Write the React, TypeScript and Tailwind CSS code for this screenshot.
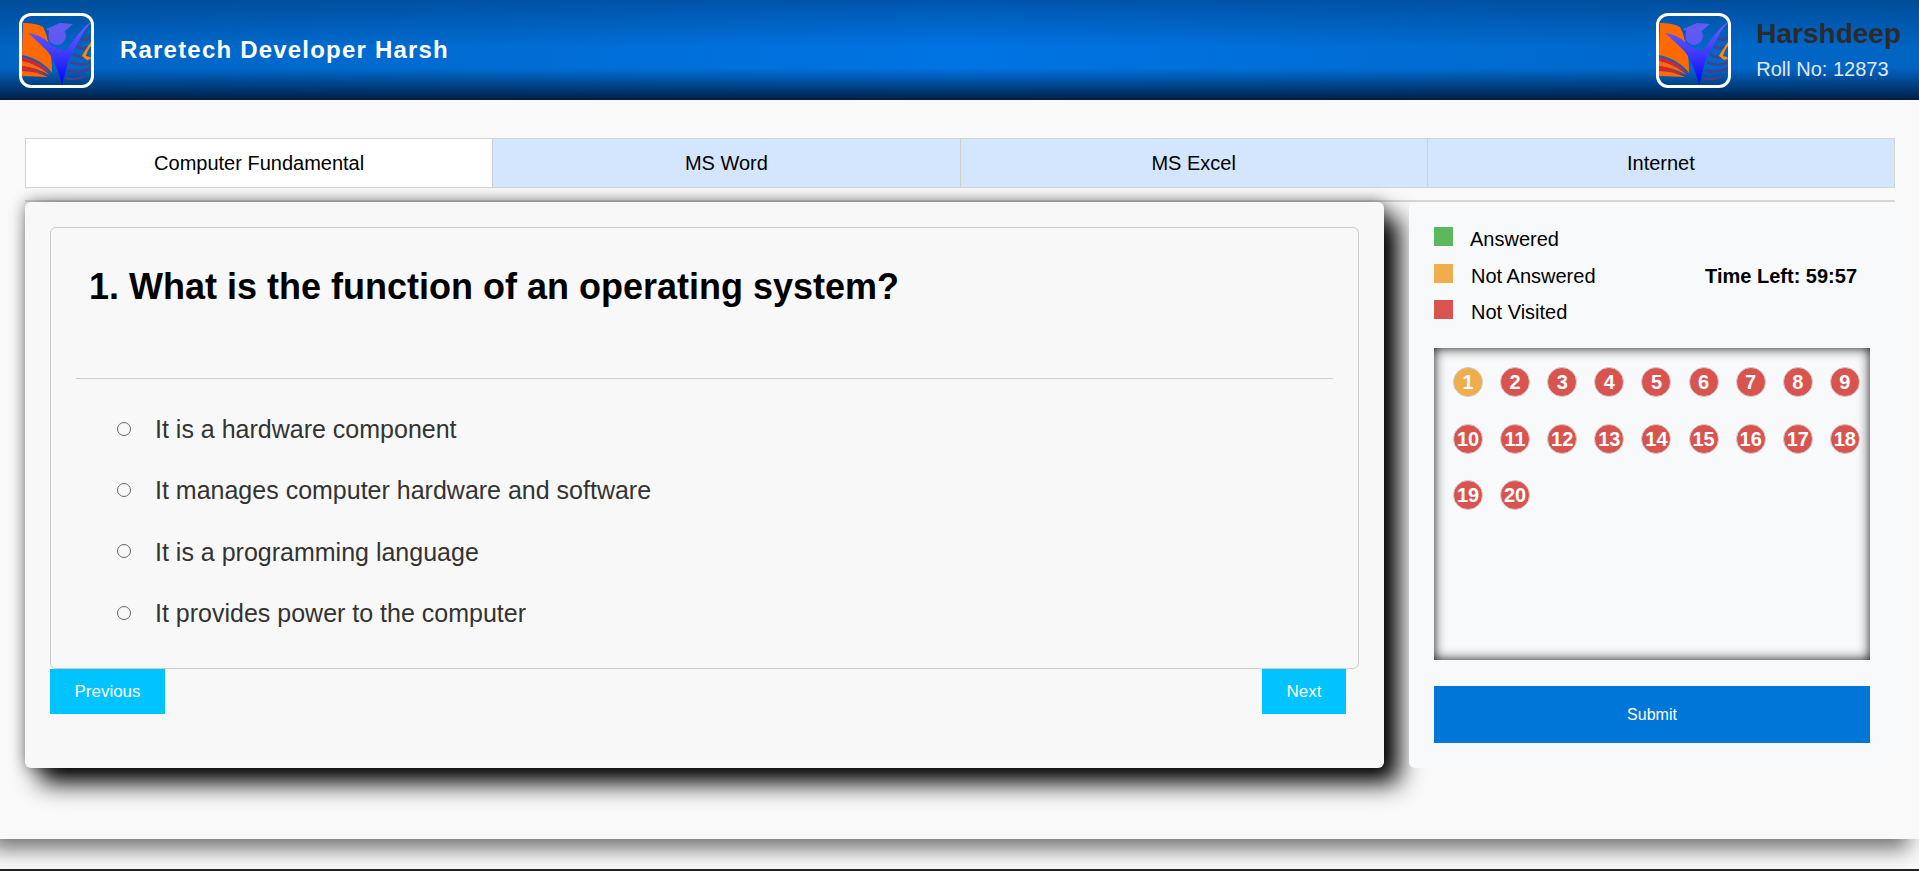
const font = "font-['Liberation_Sans',Arial,sans-serif]";

function Logo({ id }: { id: string }) {
  return (
    <div className="w-[75px] h-[75px] shrink-0 rounded-[12px] border-[3px] border-white overflow-hidden">
      <svg viewBox="0 0 69 69" className="w-full h-full block">
        <defs>
          <linearGradient id={id} x1="0" y1="0" x2="0" y2="1">
            <stop offset="0" stopColor="#6f62ff" />
            <stop offset="0.55" stopColor="#3a36ff" />
            <stop offset="1" stopColor="#0000ff" />
          </linearGradient>
        </defs>
        <path d="M1 7 C9 7 16 8 21 11 C27 22 30 40 30 57 C24 48 12 41 0 39 Z" fill="#ff6a00" />
        <path d="M0 41 C12 43 23 50 29 58 C20 52 10 47 0 45 Z" fill="#d8232a" />
        <path d="M0 45 C10 47 20 52 28 59 C19 54 9 51 0 50 Z" fill="#ff6a00" />
        <path d="M0 50 C9 51 19 55 27 60 C18 57 9 55 0 55 Z" fill="#d8232a" />
        <path d="M0 55 C9 55 18 57 26 61 L0 60 Z" fill="#ff6a00" />
        <g fill="none" stroke="#45408f" strokeWidth="2.6">
          <path d="M58 22 C62 24 65 24 69 22" />
          <path d="M54 30 C60 33 62 33 66 31" />
          <path d="M51 38 C57 42 62 42 66 40" />
          <path d="M48 46 C56 50 64 49 69 46" />
          <path d="M46 54 C54 57 62 56 69 52" />
          <path d="M44 62 C50 64 58 63 63 60" />
        </g>
        <path d="M69 26 C66 30 62 36 60 40 L65 44 L69 43 L68 41 L64 40 C65 36 67 32 69 30 Z" fill="#ff8a00" />
        <path d="M6 17 C14 18 20 21 25 25 C30 30 37 35 45 34 C51 24 60 12 70 5 C66 10 62 15 60 19 C54 30 49 38 46 46 C44 54 42 62 40 69 C38 60 35 52 31 44 C28 38 25 34 21 31 C16 26 11 21 6 17 Z" fill={`url(#${id})`} />
        <circle cx="35" cy="20" r="9" fill="#5f58f2" />
        <path d="M24 13 L38 7 L51 8 L43 15 L30 18 Z" fill="#615cee" />
        <path d="M26 14 L26 24" stroke="#3a38c0" strokeWidth="1" />
      </svg>
    </div>
  );
}

const legend = [
  ["Answered", "bg-[#5cb85c]", "ml-[17px]"],
  ["Not Answered", "bg-[#f0ad4e]", "ml-[18px]"],
  ["Not Visited", "bg-[#d9534f]", "ml-[18px]"],
];

const options = [
  "It is a hardware component",
  "It manages computer hardware and software",
  "It is a programming language",
  "It provides power to the computer",
];

export default function App() {
  return (
    <div className={`${font} w-[1919px] h-[871px] overflow-hidden bg-[#fafafa] flex flex-col`}>
      <header className="h-[100px] shrink-0 flex items-center justify-between pl-[19px] pr-[18px] bg-[linear-gradient(180deg,rgba(0,40,90,0.4)_0%,rgba(0,40,90,0)_47%,rgba(0,30,70,0)_68%,rgba(0,20,50,0.85)_100%),linear-gradient(90deg,#0064c2_0%,#0074e4_50%,#0064c2_100%)]">
        <div className="flex items-center gap-[26px]">
          <Logo id="logo-a" />
          <div className="text-white font-bold text-[24px] tracking-[1.2px]">Raretech Developer Harsh</div>
        </div>
        <div className="flex items-center gap-[25px]">
          <Logo id="logo-b" />
          <div>
            <div className="text-[28px] leading-[34px] font-bold text-[#2b2b2b]">Harshdeep</div>
            <div className="text-[20px] leading-[28px] mt-[4px] text-[#e3e8f0]">Roll No: 12873</div>
          </div>
        </div>
      </header>

      <main className="h-[739px] shrink-0 bg-[#f9f9f9] shadow-[-10px_10px_20px_rgba(0,0,0,0.55)] pl-[25px] pt-[38px] pr-[24px]">
        <div className="flex h-[50px] border border-[#d4d4d4]">
          {["Computer Fundamental", "MS Word", "MS Excel", "Internet"].map((t, i) => (
            <div
              key={t}
              className={`flex-1 flex items-center justify-center text-[20px] text-black ${i === 0 ? "bg-white" : "bg-[#d4e6fd]"} ${i > 0 ? "border-l border-[#cfcfcf]" : ""}`}
            >
              {t}
            </div>
          ))}
        </div>
        <div className="h-[2px] mt-[12px] bg-[#d6d6d6]" />

        <div className="flex gap-[25px] items-stretch h-[566px]">
          <section className="w-[1359px] shrink-0 h-full bg-[#f8f8f8] rounded-[6px] shadow-[15px_15px_25px_#000000,0_0_15px_rgba(0,0,0,0.45)] px-[25px] pt-[25px]">
            <div className="h-[442px] border border-[#cccccc] rounded-[6px] px-[25px]">
              <h1 className="text-[36px] leading-[42px] font-bold text-black pl-[13px] pt-[38px] h-[150px]">
                1. What is the function of an operating system?
              </h1>
              <div className="h-px bg-[#d0d0d0]" />
              <div className="pt-[20px] flex flex-col">
                {options.map((o) => (
                  <div key={o} className="h-[61.4px] flex items-center pl-[41px] text-[25px] text-[#333333]">
                    <span className="w-[14px] h-[14px] -translate-y-px rounded-full border border-[#666666] bg-[#f8f8f8] shrink-0" />
                    <span className="ml-[24px]">{o}</span>
                  </div>
                ))}
              </div>
            </div>
            <div className="flex justify-between pr-[13px]">
              <button className="w-[115px] h-[45px] bg-[#00c3ff] text-white text-[17px]">Previous</button>
              <button className="w-[84px] h-[45px] bg-[#00c3ff] text-white text-[17px]">Next</button>
            </div>
          </section>

          <aside className="flex-1 h-full bg-[#f8f9fb] rounded-[6px] px-[25px] pt-[25px]">
            <div className="flex justify-between items-start h-[121px]">
              <div className="flex flex-col">
                {legend.map(([label, color, ml]) => (
                  <div key={label} className="flex items-start h-[36.5px] text-[20px] leading-[24px] text-black">
                    <span className={`w-[19px] h-[19px] ${color}`} />
                    <span className={ml}>{label}</span>
                  </div>
                ))}
              </div>
              <div className="text-[20px] leading-[24px] mt-[37px] font-bold text-black pr-[13px]">Time Left: 59:57</div>
            </div>
            <div className="h-[312px] shadow-[inset_0_0_12px_rgba(0,0,0,0.95)] pl-[19px] pr-[10px] pt-[19px]">
              <div className="grid grid-cols-9 gap-x-[17px] auto-rows-[56.5px] w-[407px]">
                {Array.from({ length: 20 }, (_, i) => (
                  <div
                    key={i}
                    className={`w-[30px] h-[30px] rounded-full border border-[#cfcfcf] flex items-center justify-center text-white font-bold text-[20px] ${i === 0 ? "bg-[#f0ad4e]" : "bg-[#d9534f]"}`}
                  >
                    {i + 1}
                  </div>
                ))}
              </div>
            </div>
            <button className="mt-[26px] w-full h-[57px] bg-[#0076d9] text-white text-[16px]">Submit</button>
          </aside>
        </div>
      </main>

      <div className="flex-1" />
      <div className="h-[2px] shrink-0 bg-[#222222]" />
    </div>
  );
}
